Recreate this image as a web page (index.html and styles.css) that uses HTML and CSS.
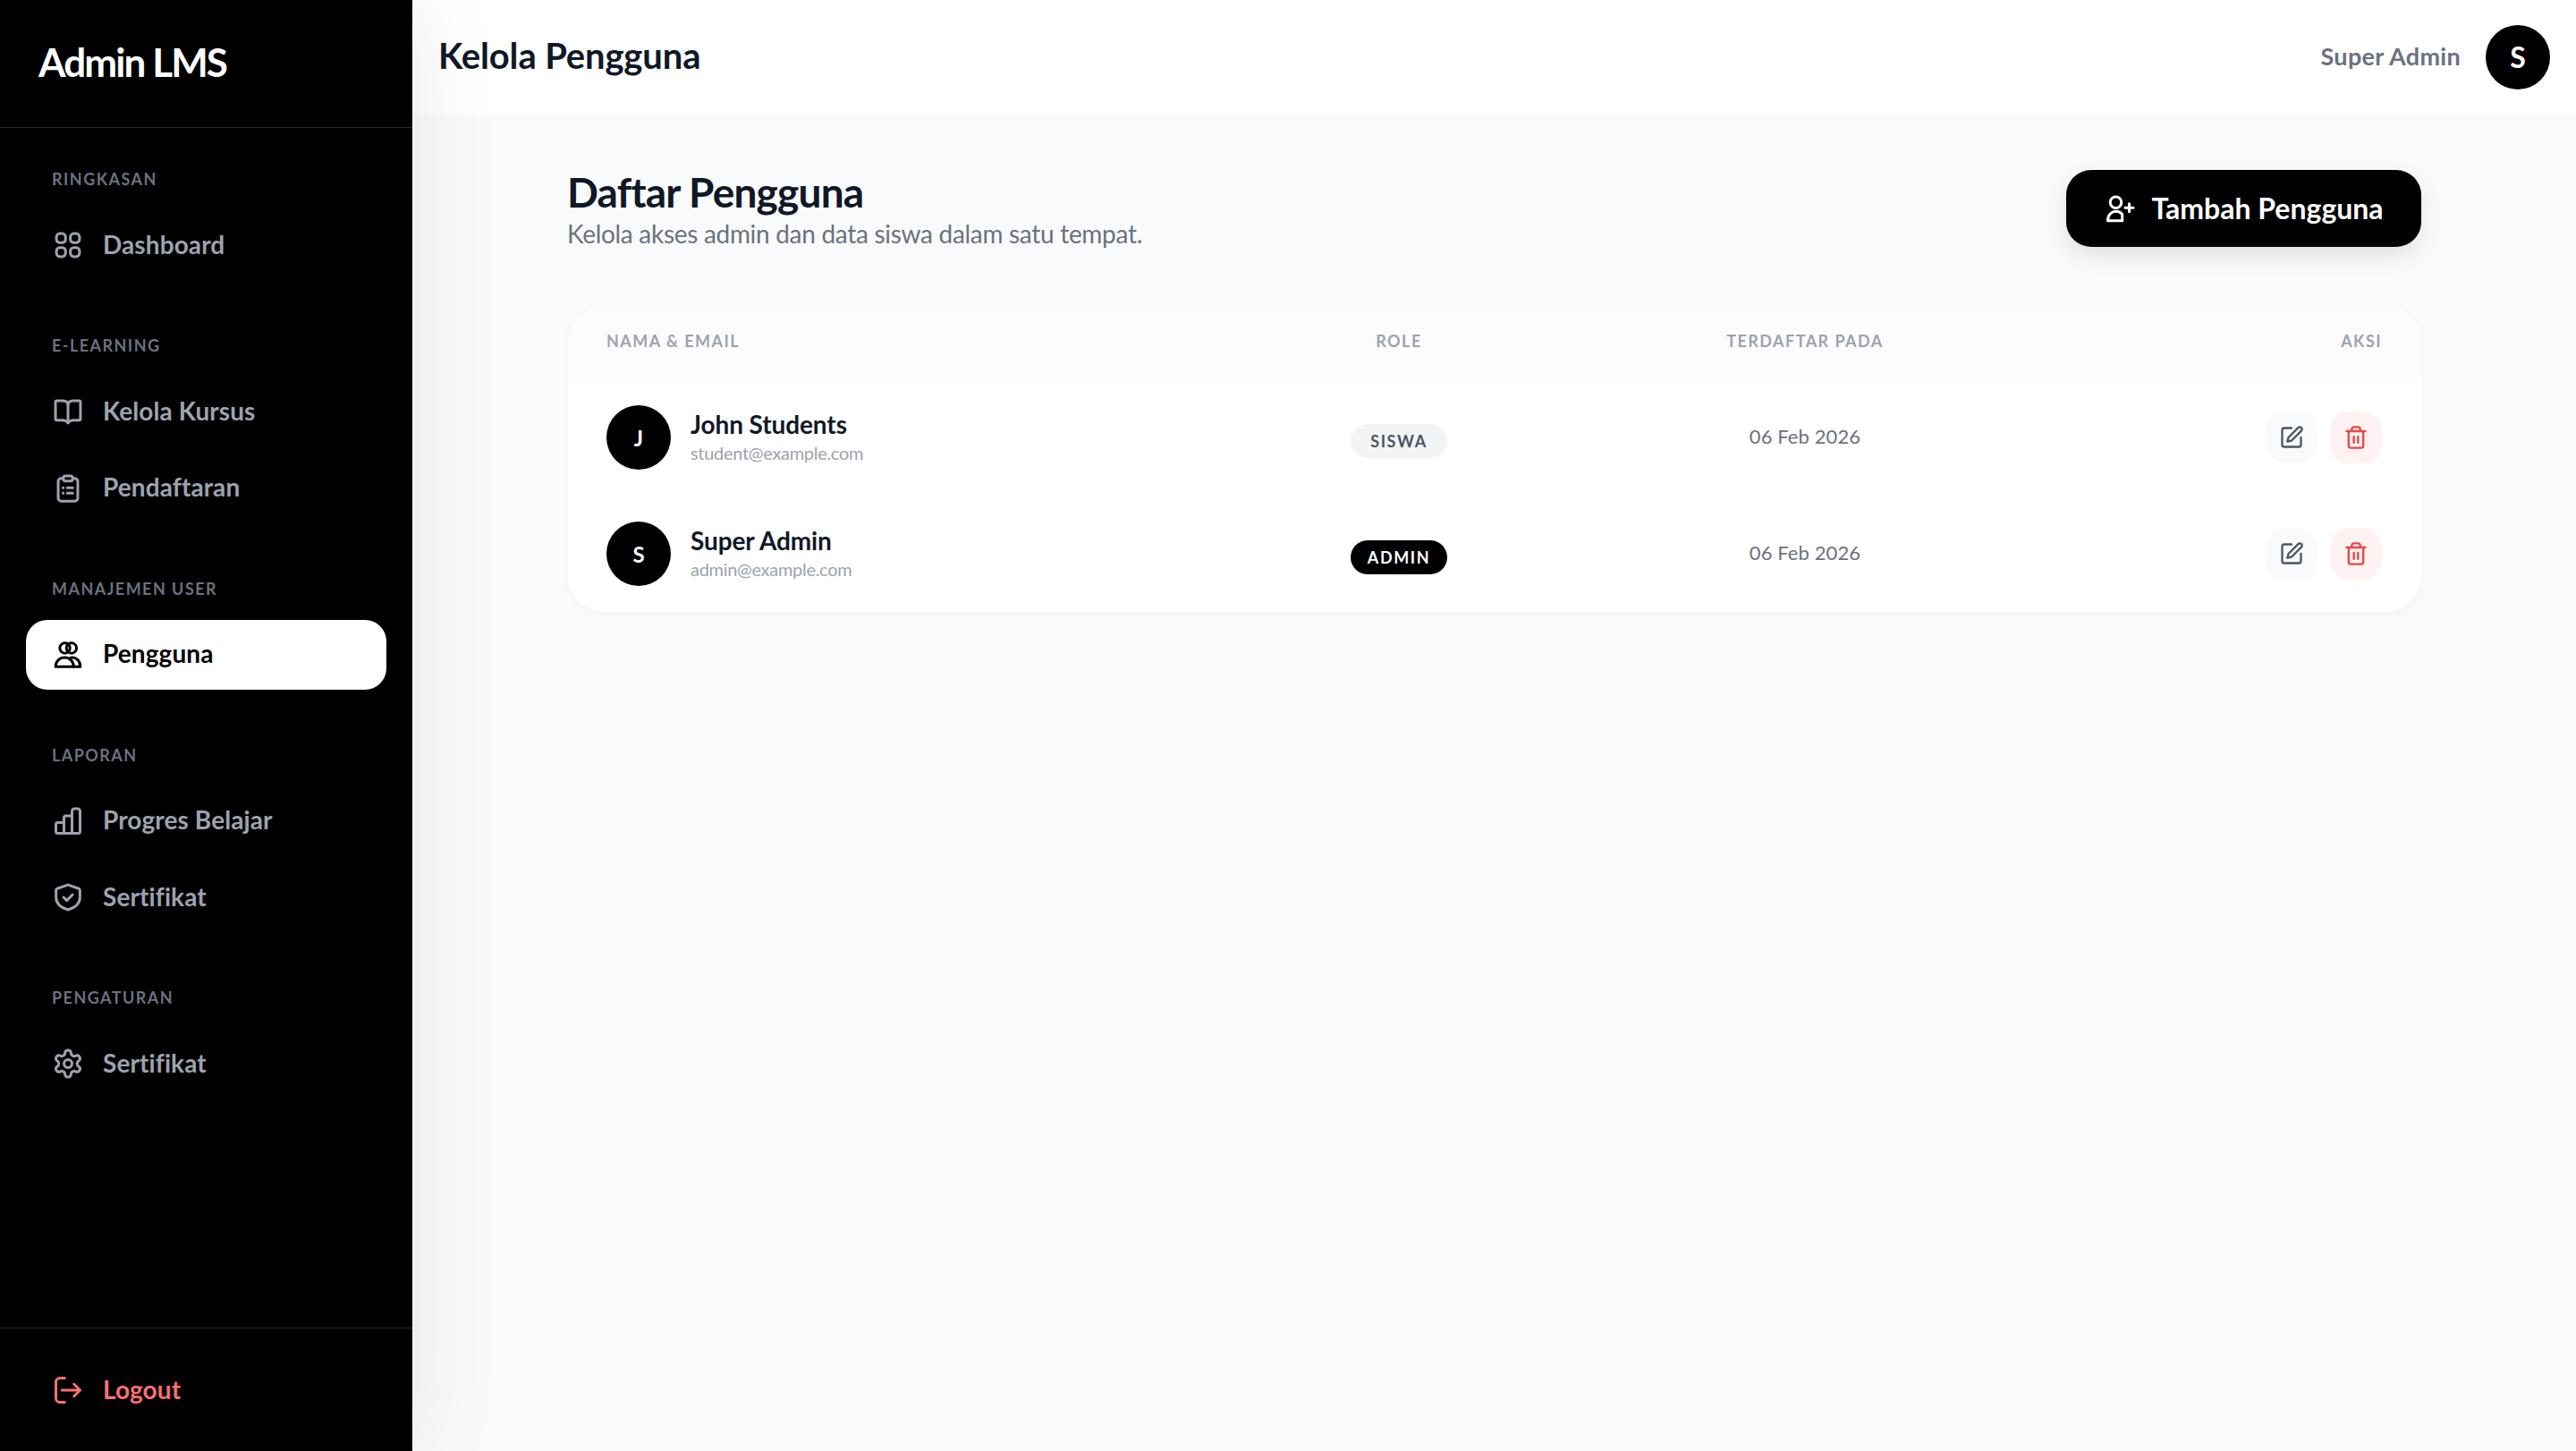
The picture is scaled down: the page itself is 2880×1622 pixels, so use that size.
FILE: index.html
```html
<!DOCTYPE html>
<html lang="id">
<head>
<meta charset="utf-8">
<title>Kelola Pengguna</title>
<link rel="stylesheet" href="styles.css">
</head>
<body>
<div class="app">
  <aside class="sidebar">
    <div class="brand">Admin LMS</div>
    <nav class="nav">
      <section class="nav-section">
        <div class="nav-label">RINGKASAN</div>
        <a class="nav-item"><svg class="icon" viewBox="0 0 24 24"><rect x="3.4" y="3.4" width="6.8" height="6.8" rx="2.6"/><rect x="13.8" y="3.4" width="6.8" height="6.8" rx="2.6"/><rect x="3.4" y="13.8" width="6.8" height="6.8" rx="2.6"/><rect x="13.8" y="13.8" width="6.8" height="6.8" rx="2.6"/></svg><span>Dashboard</span></a>
      </section>
      <section class="nav-section">
        <div class="nav-label">E-LEARNING</div>
        <a class="nav-item"><svg class="icon" viewBox="0 0 24 24"><path d="M12 7c0-2-1.500-3-4-3H3.800C3 4 2.700 4.500 2.700 5.200V17.500c0 .6.400 1 1 1H8c1.600 0 3 .6 4 2"/><path d="M12 7c0-2 1.500-3 4-3h4.200c.8 0 1.100.500 1.100 1.200V17.500c0 .6-.4 1-1 1H16c-1.600 0-3 .6-4 2Z"/></svg><span>Kelola Kursus</span></a>
        <a class="nav-item"><svg class="icon" viewBox="0 0 24 24"><path d="M8.500 4.500H7A2.300 2.300 0 0 0 4.700 6.800v12.400A2.300 2.300 0 0 0 7 21.500h10a2.300 2.300 0 0 0 2.300-2.300V6.800A2.300 2.300 0 0 0 17 4.500h-1.500"/><rect x="8.500" y="2.700" width="7" height="3.800" rx="1.700"/><path d="M11.500 11.500h4M11.500 15.500h4M8.300 11.500h.2M8.300 15.500h.2"/></svg><span>Pendaftaran</span></a>
      </section>
      <section class="nav-section">
        <div class="nav-label">MANAJEMEN USER</div>
        <a class="nav-item active"><svg class="icon" viewBox="0 0 24 24"><circle cx="9.700" cy="7" r="3.800"/><circle cx="14.600" cy="7" r="3.800"/><path d="M2.800 20.800c0-4 3-6.800 6.700-6.800s6.700 2.800 6.700 6.800Z"/><path d="M14 14.200c4-.9 7.200 2.400 7.200 6.600h-5"/></svg><span>Pengguna</span></a>
      </section>
      <section class="nav-section">
        <div class="nav-label">LAPORAN</div>
        <a class="nav-item"><svg class="icon" viewBox="0 0 24 24"><path d="M9 13H4.500A1.500 1.500 0 0 0 3 14.500V19.500A1.500 1.500 0 0 0 4.500 21h15a1.500 1.500 0 0 0 1.500-1.500V4.500A1.800 1.800 0 0 0 19.200 2.700h-2.400A1.800 1.800 0 0 0 15 4.500V21"/><path d="M9 21V9.500A1.500 1.500 0 0 1 10.500 8H15"/></svg><span>Progres Belajar</span></a>
        <a class="nav-item"><svg class="icon" viewBox="0 0 24 24"><path d="M12 2.800l7.900 2.700c.6.200 1 .7 1 1.300V12c0 4.800-4.200 7.900-8.900 9.300C7.300 19.900 3.100 16.800 3.100 12V6.800c0-.6.4-1.100 1-1.300Z"/><path d="M8.700 12l2.400 2.400 4.300-4.300"/></svg><span>Sertifikat</span></a>
      </section>
      <section class="nav-section">
        <div class="nav-label">PENGATURAN</div>
        <a class="nav-item"><svg class="icon" viewBox="0 0 24 24"><path d="M12.220 2h-.44a2 2 0 0 0-2 2v.18a2 2 0 0 1-1 1.730l-.43.250a2 2 0 0 1-2 0l-.15-.08a2 2 0 0 0-2.730.730l-.22.380a2 2 0 0 0 .73 2.730l.15.100a2 2 0 0 1 1 1.720v.510a2 2 0 0 1-1 1.740l-.15.090a2 2 0 0 0-.73 2.730l.22.380a2 2 0 0 0 2.730.730l.15-.08a2 2 0 0 1 2 0l.43.250a2 2 0 0 1 1 1.730V20a2 2 0 0 0 2 2h.44a2 2 0 0 0 2-2v-.18a2 2 0 0 1 1-1.730l.43-.25a2 2 0 0 1 2 0l.15.080a2 2 0 0 0 2.730-.730l.22-.39a2 2 0 0 0-.73-2.730l-.15-.08a2 2 0 0 1-1-1.740v-.5a2 2 0 0 1 1-1.740l.15-.09a2 2 0 0 0 .73-2.730l-.22-.38a2 2 0 0 0-2.730-.73l-.15.080a2 2 0 0 1-2 0l-.43-.25a2 2 0 0 1-1-1.730V4a2 2 0 0 0-2-2z"/><circle cx="12" cy="12" r="3"/></svg><span>Sertifikat</span></a>
      </section>
    </nav>
    <div class="sidebar-foot">
      <a class="nav-item logout"><svg class="icon" viewBox="0 0 24 24"><path d="M9.500 3H6a3 3 0 0 0-3 3v12a3 3 0 0 0 3 3h3.500"/><path d="M7.500 12H21M16.500 7.500 21 12l-4.500 4.500"/></svg><span>Logout</span></a>
    </div>
  </aside>

  <div class="main">
    <header class="topbar">
      <div class="topbar-title">Kelola Pengguna</div>
      <div class="topbar-user">
        <span class="topbar-name">Super Admin</span>
        <span class="topbar-avatar">S</span>
      </div>
    </header>
    <main class="content">
      <div class="page-head">
        <div class="page-text">
          <h1 class="page-title">Daftar Pengguna</h1>
          <p class="page-sub">Kelola akses admin dan data siswa dalam satu tempat.</p>
        </div>
        <button class="add-btn"><svg class="icon" viewBox="0 0 24 24"><circle cx="9" cy="7.500" r="4.200"/><path d="M3 21.200c0-4 2.500-7 6.200-7 2 0 3.600.8 4.600 2.200v4.800Z"/><path d="M19 8.500v6M16 11.500h6"/></svg><span>Tambah Pengguna</span></button>
      </div>
      <div class="card">
        <div class="grid-row head">
          <div>NAMA &amp; EMAIL</div>
          <div class="center">ROLE</div>
          <div class="center">TERDAFTAR PADA</div>
          <div class="right">AKSI</div>
        </div>
        <div class="grid-row row">
          <div class="user">
            <span class="avatar">J</span>
            <div class="user-text">
              <div class="user-name">John Students</div>
              <div class="user-mail">student@example.com</div>
            </div>
          </div>
          <div class="center"><span class="badge siswa">SISWA</span></div>
          <div class="center date">06 Feb 2026</div>
          <div class="actions">
            <button class="act edit"><svg viewBox="0 0 24 24"><path d="M12 3H5a2 2 0 0 0-2 2v14a2 2 0 0 0 2 2h14a2 2 0 0 0 2-2v-7"/><path d="M18.375 2.625a2.121 2.121 0 1 1 3 3L12 15l-4 1 1-4Z"/></svg></button>
            <button class="act del"><svg viewBox="0 0 24 24"><path d="M3 6h18M19 6v14a2 2 0 0 1-2 2H7a2 2 0 0 1-2-2V6M8 6V4a2 2 0 0 1 2-2h4a2 2 0 0 1 2 2v2M10 11v6M14 11v6"/></svg></button>
          </div>
        </div>
        <div class="grid-row row">
          <div class="user">
            <span class="avatar">S</span>
            <div class="user-text">
              <div class="user-name">Super Admin</div>
              <div class="user-mail">admin@example.com</div>
            </div>
          </div>
          <div class="center"><span class="badge admin">ADMIN</span></div>
          <div class="center date">06 Feb 2026</div>
          <div class="actions">
            <button class="act edit"><svg viewBox="0 0 24 24"><path d="M12 3H5a2 2 0 0 0-2 2v14a2 2 0 0 0 2 2h14a2 2 0 0 0 2-2v-7"/><path d="M18.375 2.625a2.121 2.121 0 1 1 3 3L12 15l-4 1 1-4Z"/></svg></button>
            <button class="act del"><svg viewBox="0 0 24 24"><path d="M3 6h18M19 6v14a2 2 0 0 1-2 2H7a2 2 0 0 1-2-2V6M8 6V4a2 2 0 0 1 2-2h4a2 2 0 0 1 2 2v2M10 11v6M14 11v6"/></svg></button>
          </div>
        </div>
      </div>
    </main>
  </div>
</div>
</body>
</html>
```

FILE: styles.css
```css
* { box-sizing: border-box; }
html, body { margin: 0; height: 100%; }
body {
  font-family: "Lato", "Open Sans", sans-serif;
  background: #f9fafb;
  overflow: hidden;
}
svg { fill: none; stroke: currentColor; stroke-linecap: round; stroke-linejoin: round; flex: none; display: block; }

.app { display: flex; height: 1622px; }

.sidebar {
  width: 461px;
  flex: none;
  background: #000;
  display: flex;
  flex-direction: column;
  position: relative;
  z-index: 2;
  box-shadow: 0 0 100px rgba(0, 0, 0, .09);
}
.brand {
  height: 143px;
  padding: 0 0 5px 43px;
  display: flex;
  align-items: center;
  border-bottom: 1px solid #2a2a2a;
  color: #fff;
  font-size: 44px;
  font-weight: 700;
  letter-spacing: -1.9px;
}
.nav { flex: 1; padding: 41px 29px 0; }
.nav-section { margin-bottom: 56.5px; }
.nav-label {
  height: 28px;
  line-height: 28px;
  margin-bottom: 23px;
  padding: 2px 0 0 29px;
  color: #6b7280;
  font-size: 18px;
  font-weight: 700;
  letter-spacing: 1.45px;
}
.nav-item {
  height: 78.5px;
  display: flex;
  align-items: center;
  gap: 21px;
  padding-left: 29px;
  border-radius: 24px;
  color: #9ca3af;
  font-size: 28px;
  font-weight: 700;
  letter-spacing: .1px;
}
.nav-item span { padding-bottom: 3px; }
.nav-item + .nav-item { margin-top: 7px; }
.nav-item.active { background: #fff; color: #000; }
.icon { width: 36px; height: 36px; stroke-width: 2; }
.sidebar-foot { border-top: 1px solid #2a2a2a; height: 138px; padding: 30px 29px 0; }
.logout { color: #f87171; }

.main { flex: 1; min-width: 0; display: flex; flex-direction: column; }
.topbar {
  height: 127px;
  flex: none;
  background: #fff;
  display: flex;
  align-items: center;
  justify-content: space-between;
  padding: 0 29px 0 29px;
}
.topbar-title { padding-bottom: 3px; color: #111827; font-size: 40px; font-weight: 700; letter-spacing: -.15px; }
.topbar-user { display: flex; align-items: center; gap: 28px; }
.topbar-name { padding-bottom: 3px; color: #6b7280; font-size: 27px; font-weight: 700; letter-spacing: .3px; }
.topbar-avatar {
  width: 72px;
  height: 72px;
  border-radius: 50%;
  background: #000;
  color: #fff;
  display: flex;
  align-items: center;
  justify-content: center;
  font-size: 32px;
  font-weight: 700;
}

.content { padding: 63px 173px 0 174px; }
.page-head { height: 86px; display: flex; align-items: center; justify-content: space-between; }
.page-text { margin-left: -1px; }
.page-title {
  margin: 0;
  color: #111827;
  font-size: 46px;
  line-height: 54px;
  font-weight: 700;
  letter-spacing: -.8px;
}
.page-sub {
  margin: 2px 0 0;
  color: #6b7280;
  font-size: 28px;
  line-height: 34px;
  font-weight: 400;
  letter-spacing: -.3px;
}
.add-btn {
  width: 397px;
  height: 86px;
  border: 0;
  border-radius: 28px;
  background: #000;
  color: #fff;
  display: flex;
  align-items: center;
  justify-content: center;
  gap: 17px;
  font: 700 32px "Lato", sans-serif;
  letter-spacing: 0;
  box-shadow: 0 10px 24px rgba(0, 0, 0, .1);
}
.add-btn span { padding-bottom: 2px; }

.card {
  margin-top: 66px;
  height: 342px;
  background: #fff;
  border-radius: 40px;
  overflow: hidden;
  box-shadow: 0 2px 8px rgba(0, 0, 0, .03);
}
.grid-row {
  display: grid;
  grid-template-columns: 736px 300px 608px 1fr;
  align-items: center;
  padding: 0 44px 0 43px;
}
.head {
  height: 82px;
  padding-bottom: 5px;
  background: #fcfcfd;
  color: #9ca3af;
  font-size: 18px;
  font-weight: 700;
  letter-spacing: 1.45px;
}
.row { height: 130px; }
.center { text-align: center; }
.right { text-align: right; }
.user { display: flex; align-items: center; gap: 22px; }
.avatar {
  width: 72px;
  height: 72px;
  border-radius: 50%;
  background: #000;
  color: #fff;
  display: flex;
  align-items: center;
  justify-content: center;
  font-size: 24px;
  font-weight: 700;
}
.user-text { padding-bottom: 2px; }
.user-name { color: #111827; font-size: 28px; line-height: 34px; font-weight: 700; letter-spacing: -.1px; }
.user-mail { margin-top: 3px; color: #9ca3af; font-size: 20px; line-height: 25px; letter-spacing: -.3px; }
.badge {
  display: inline-block;
  margin-top: 8px;
  width: 108px;
  height: 38px;
  line-height: 38px;
  border-radius: 19px;
  text-align: center;
  font-size: 18px;
  font-weight: 700;
  letter-spacing: 1.6px;
}
.siswa { background: #f3f4f6; color: #4b5563; }
.admin { background: #000; color: #fff; }
.date { padding-bottom: 3px; color: #6b7280; font-size: 22px; letter-spacing: .1px; }
.actions { display: flex; justify-content: flex-end; gap: 14px; }
.act {
  width: 58px;
  height: 58px;
  padding: 0;
  border: 0;
  border-radius: 21px;
  display: flex;
  align-items: center;
  justify-content: center;
}
.act svg { width: 28px; height: 28px; stroke-width: 2; }
.edit { background: #f9fafb; color: #4b5563; }
.del { background: #fef2f2; color: #ef4444; }
```
